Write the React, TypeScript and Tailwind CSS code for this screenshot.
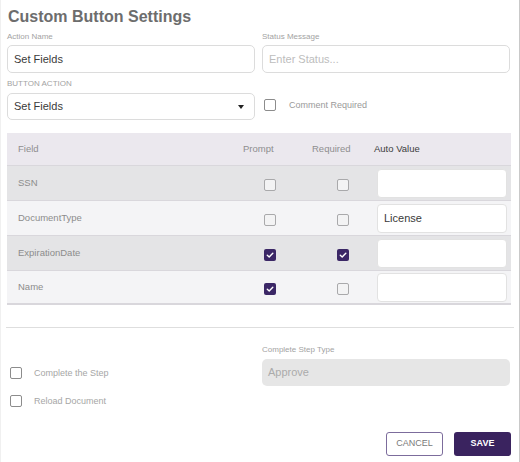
import React from 'react';

type Row = {
  field: string;
  prompt: boolean;
  required: boolean;
  value: string;
};

const rows: Row[] = [
  { field: 'SSN', prompt: false, required: false, value: '' },
  { field: 'DocumentType', prompt: false, required: false, value: 'License' },
  { field: 'ExpirationDate', prompt: true, required: true, value: '' },
  { field: 'Name', prompt: true, required: false, value: '' },
];

function Check({ checked, dark }: { checked: boolean; dark?: boolean }) {
  if (checked) {
    return (
      <span className="flex h-[12px] w-[12px] items-center justify-center rounded-[2px] bg-[#3b2766]">
        <svg width="8" height="8" viewBox="0 0 8 8" fill="none">
          <path d="M1.3 4.2 L3.2 5.9 L6.8 2.2" stroke="white" strokeWidth="1.4" strokeLinecap="round" strokeLinejoin="round" />
        </svg>
      </span>
    );
  }
  return (
    <span
      className={`block h-[12px] w-[12px] rounded-[2px] border-[1.5px] ${
        dark ? 'border-[#8c8c8c] bg-white' : 'border-[#a9a9ab] bg-[#f3f3f4]'
      }`}
    />
  );
}

export default function App() {
  return (
    <div
      className="flex h-[462px] w-[520px] flex-col border-l border-r border-l-[#f0f0f0] border-r-[#c9c9c9] bg-white pl-[6px] pr-[9px]"
      style={{ fontFamily: '"Liberation Sans", Arial, sans-serif' }}
    >
      {/* Title */}
      <h1 className="mt-[6px] h-[22px] pl-[1px] text-[16px] font-bold leading-[22px] text-[#6d6d6d]">
        Custom Button Settings
      </h1>

      {/* Action name / status */}
      <div className="mt-[4px] grid grid-cols-2 gap-[7px]">
        <div className="flex flex-col">
          <label className="h-[10px] text-[8px] leading-[10px] text-[#a3a3a3]">Action Name</label>
          <div className="mt-[3px] flex h-[28px] items-center rounded-[5px] border border-[#dcdcdc] px-[6px] text-[11px] text-[#3a3a3a]">
            Set Fields
          </div>
        </div>
        <div className="flex flex-col">
          <label className="h-[10px] text-[8px] leading-[10px] text-[#a3a3a3]">Status Message</label>
          <div className="mt-[3px] flex h-[28px] items-center rounded-[5px] border border-[#dcdcdc] px-[6px] text-[11px] text-[#bdbdbd]">
            Enter Status...
          </div>
        </div>
      </div>

      {/* Button action */}
      <div className="mt-[6px] grid grid-cols-2 gap-[7px]">
        <div className="flex flex-col">
          <label className="h-[10px] text-[8px] leading-[10px] text-[#a3a3a3]">BUTTON ACTION</label>
          <div className="mt-[4px] flex h-[27px] items-center justify-between rounded-[5px] border border-[#dcdcdc] pl-[6px] pr-[10px] text-[11px] text-[#3a3a3a]">
            <span>Set Fields</span>
            <svg width="6" height="4" viewBox="0 0 6 4">
              <path d="M0 0 L6 0 L3 4 Z" fill="#222" />
            </svg>
          </div>
        </div>
        <div className="flex items-end pb-[9px] pl-[2px]">
          <Check checked={false} dark />
          <span className="ml-[13px] text-[9px] leading-[12px] text-[#9a9a9a]">Comment Required</span>
        </div>
      </div>

      {/* Fields table */}
      <div className="mt-[13px] mr-[-1px] text-[9.5px]">
        <div className="grid h-[32px] grid-cols-[236px_69px_61px_1fr] items-center bg-[#ebe8ee]">
          <span className="pl-[11px] text-[#8e8e8e]">Field</span>
          <span className="text-[#8e8e8e]">Prompt</span>
          <span className="text-[#8e8e8e]">Required</span>
          <span className="pl-[1px] text-[#3d3d3d]">Auto Value</span>
        </div>
        {rows.map((r, i) => (
          <div
            key={r.field}
            className={`grid h-[35px] grid-cols-[236px_69px_61px_1fr] items-center border-t border-[#d9d7dc] ${
              i % 2 === 0 ? 'bg-[#e4e4e6]' : 'bg-[#f4f4f6]'
            } ${i === rows.length - 1 ? 'border-b-2' : ''}`}
          >
            <span className="pl-[11px] text-[#8c8c8c]">{r.field}</span>
            <span className="pl-[21px] pt-[4px]">
              <Check checked={r.prompt} />
            </span>
            <span className="pl-[25px] pt-[4px]">
              <Check checked={r.required} />
            </span>
            <div className="pl-[4px] pr-[4px]">
              <div className="flex h-[29px] items-center rounded-[4px] border border-[#e2e2e2] bg-white px-[6px] text-[11px] text-[#3a3a3a]">
                {r.value}
              </div>
            </div>
          </div>
        ))}
      </div>

      {/* Divider */}
      <div className="mt-[22px] ml-[-1px] mr-[-4px] h-px bg-[#dedede]" />

      {/* Completion */}
      <div className="mt-[17px] grid grid-cols-2 gap-[7px]">
        <div className="flex flex-col gap-[16px] pl-[3px] pt-[22px]">
          <div className="flex items-center">
            <Check checked={false} dark />
            <span className="ml-[12px] text-[9px] leading-[12px] text-[#a6a6a6]">Complete the Step</span>
          </div>
          <div className="flex items-center">
            <Check checked={false} dark />
            <span className="ml-[12px] text-[9px] leading-[12px] text-[#a6a6a6]">Reload Document</span>
          </div>
        </div>
        <div className="flex flex-col">
          <label className="h-[10px] text-[8px] leading-[10px] text-[#a3a3a3]">Complete Step Type</label>
          <div className="mt-[4px] flex h-[27px] items-center rounded-[5px] bg-[#e6e6e6] px-[6px] text-[11px] text-[#ababab]">
            Approve
          </div>
        </div>
      </div>

      {/* Actions */}
      <div className="mt-auto mb-[6px] mr-[-1px] flex justify-end gap-[11px]">
        <button className="flex h-[24px] w-[57px] items-center justify-center rounded-[3px] border border-[#7c6c9c] text-[9px] text-[#7a7a7a]">
          CANCEL
        </button>
        <button className="flex h-[24px] w-[57px] items-center justify-center rounded-[3px] bg-[#3a235f] text-[9px] font-bold text-white">
          SAVE
        </button>
      </div>
    </div>
  );
}
